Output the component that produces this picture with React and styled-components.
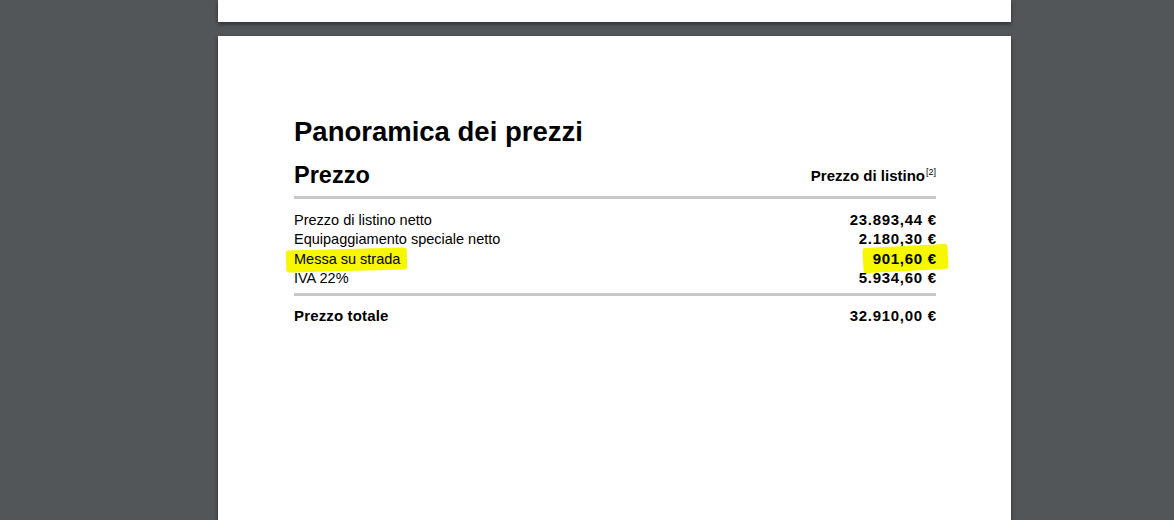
import styled, { createGlobalStyle } from 'styled-components';

const GlobalStyle = createGlobalStyle`
  html, body {
    margin: 0;
    padding: 0;
    background: #525659;
    overflow: hidden;
  }
`;

const Viewer = styled.div`
  display: flex;
  flex-direction: column;
  gap: 14px;
  padding-left: 218px;
  height: 520px;
  overflow: hidden;
  font-family: 'Liberation Sans', Arial, sans-serif;
  color: #000;
`;

const Page = styled.div`
  width: 793px;
  background: #fff;
  box-shadow: 0 2px 4px rgba(0, 0, 0, 0.45);
  flex-shrink: 0;
  height: ${(p) => p.$height}px;
  box-sizing: border-box;
`;

const Content = styled.div`
  padding: 80px 75px 0 76px;
`;

const Title = styled.h1`
  margin: 0;
  font-size: 27.5px;
  font-weight: 700;
  line-height: 32px;
`;

const HeadRow = styled.div`
  display: flex;
  justify-content: space-between;
  align-items: flex-end;
  margin-top: 13px;
  padding-bottom: 7px;
  border-bottom: 3px solid #c8c8c8;
`;

const Subtitle = styled.h2`
  margin: 0;
  font-size: 23.5px;
  font-weight: 700;
  line-height: 28px;
`;

const ColLabel = styled.div`
  font-size: 15px;
  font-weight: 700;
  line-height: 18px;
  margin-bottom: 4px;

  sup {
    font-size: 9px;
    font-weight: 400;
    vertical-align: 6px;
    line-height: 0;
    margin-left: 1px;
  }
`;

const List = styled.div`
  padding: 11px 0 5px;
  border-bottom: 3px solid #c8c8c8;
`;

const Row = styled.div`
  display: flex;
  justify-content: space-between;
  align-items: baseline;
  font-size: 14.5px;
  line-height: 19.4px;
  height: 19.4px;
  white-space: nowrap;
`;

const Amount = styled.span`
  font-weight: 700;
  font-size: 15px;
  letter-spacing: 0.7px;
  margin-right: -0.7px;
  white-space: nowrap;
`;

const Marked = styled.span`
  position: relative;
  z-index: 0;
  white-space: nowrap;

  &::before {
    content: '';
    position: absolute;
    z-index: -1;
    left: ${(p) => p.$l}px;
    right: ${(p) => p.$r}px;
    top: ${(p) => p.$t}px;
    bottom: ${(p) => p.$b}px;
    background: #f7f700;
    border-radius: 3px;
    transform: rotate(${(p) => p.$rot}deg);
  }
`;

const TotalRow = styled(Row)`
  margin-top: 10px;
  font-weight: 700;
  font-size: 15px;
  letter-spacing: 0.15px;
`;

const rows = [
  ['Prezzo di listino netto', '23.893,44 €'],
  ['Equipaggiamento speciale netto', '2.180,30 €'],
  ['Messa su strada', '901,60 €', true],
  ['IVA 22%', '5.934,60 €'],
];

export default function App() {
  return (
    <>
      <GlobalStyle />
      <Viewer>
        <Page $height={22} />
        <Page $height={520}>
          <Content>
            <Title>Panoramica dei prezzi</Title>
            <HeadRow>
              <Subtitle>Prezzo</Subtitle>
              <ColLabel>
                Prezzo di listino<sup>[2]</sup>
              </ColLabel>
            </HeadRow>
            <List>
              {rows.map(([label, value, mark]) => (
                <Row key={label}>
                  {mark ? (
                    <>
                      <Marked $l={-8} $r={-7} $t={-1} $b={-2} $rot={-1.5}>{label}</Marked>
                      <Marked $l={-10} $r={-12} $t={-3} $b={-2} $rot={-3}>
                        <Amount>{value}</Amount>
                      </Marked>
                    </>
                  ) : (
                    <>
                      <span>{label}</span>
                      <Amount>{value}</Amount>
                    </>
                  )}
                </Row>
              ))}
            </List>
            <TotalRow>
              <span>Prezzo totale</span>
              <Amount>32.910,00 €</Amount>
            </TotalRow>
          </Content>
        </Page>
      </Viewer>
    </>
  );
}
